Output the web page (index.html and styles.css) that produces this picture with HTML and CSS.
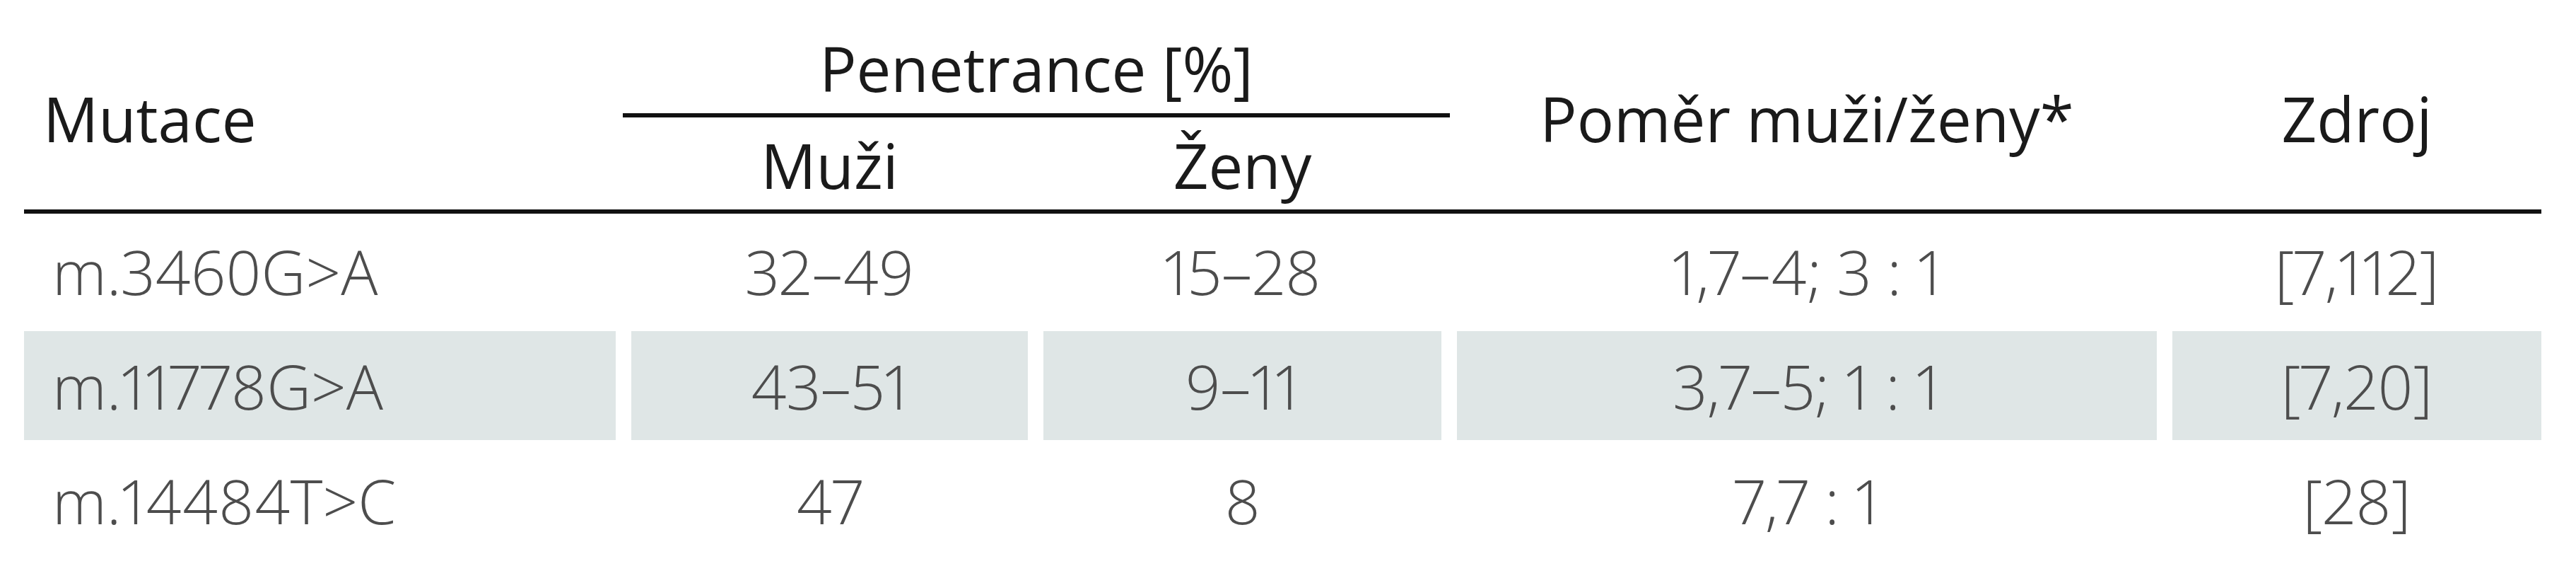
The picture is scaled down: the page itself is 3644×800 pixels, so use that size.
FILE: index.html
```html
<!DOCTYPE html>
<html lang="cs">
<head>
<meta charset="utf-8">
<title>Penetrance mutací</title>
<link rel="stylesheet" href="styles.css">
</head>
<body>
<div class="tbl">
  <div class="head">
    <div class="hc c1 span2">Mutace</div>
    <div class="hc group">Penetrance [%]</div>
    <div class="hc c4 span2">Poměr muži/ženy*</div>
    <div class="hc c5 span2">Zdroj</div>
    <div class="hc sub c2">Muži</div>
    <div class="hc sub c3">Ženy</div>
  </div>
  <div class="body">
    <div class="row">
      <div class="cell first">m.3460G&gt;A</div>
      <div class="cell">32–49</div>
      <div class="cell">15–28</div>
      <div class="cell">1,7–4; 3 : 1</div>
      <div class="cell">[7,112]</div>
    </div>
    <div class="row shaded">
      <div class="cell first">m.11778G&gt;A</div>
      <div class="cell">43–51</div>
      <div class="cell">9–11</div>
      <div class="cell">3,7–5; 1 : 1</div>
      <div class="cell">[7,20]</div>
    </div>
    <div class="row">
      <div class="cell first">m.14484T&gt;C</div>
      <div class="cell">47</div>
      <div class="cell">8</div>
      <div class="cell">7,7 : 1</div>
      <div class="cell">[28]</div>
    </div>
  </div>
</div>
</body>
</html>
```

FILE: styles.css
```css
html, body {
  margin: 0;
  padding: 0;
  background: #ffffff;
}

body {
  font-family: "Open Sans", "Noto Sans", "Liberation Sans", sans-serif;
  font-size: 87px;
  line-height: 120px;
  font-variant-numeric: proportional-nums;
}

.tbl {
  margin-left: 34px;
  width: 3561px;
  padding-top: 36px;
}

.head,
.row {
  display: grid;
  grid-template-columns: 837px 561px 563px 990px 522px;
  column-gap: 22px;
}

.head {
  grid-template-rows: auto auto;
  border-bottom: 6px solid #111111;
  color: #1a1a1a;
}

.hc {
  text-align: center;
  white-space: nowrap;
}

.span2 {
  grid-row: 1 / span 2;
  align-self: center;
  padding-top: 2px;
}

.c1 { grid-column: 1; text-align: left; padding-left: 27px; }
.c2 { grid-column: 2; }
.c3 { grid-column: 3; }
.c4 { grid-column: 4; }
.c5 { grid-column: 5; }

.group {
  grid-column: 2 / span 2;
  grid-row: 1;
  margin: 0 -12px;
  padding-bottom: 4px;
  border-bottom: 6px solid #111111;
}

.sub {
  grid-row: 2;
  padding-top: 7px;
  padding-bottom: 3px;
}

.body {
  display: flex;
  flex-direction: column;
  gap: 8px;
  padding-top: 4px;
  color: #4d4d4d;
  font-weight: 300;
}

.cell {
  height: 154px;
  display: flex;
  align-items: center;
  justify-content: center;
  white-space: nowrap;
}

.cell.first {
  justify-content: flex-start;
  padding-left: 40px;
}

.shaded .cell {
  background: #dfe6e6;
}
```
